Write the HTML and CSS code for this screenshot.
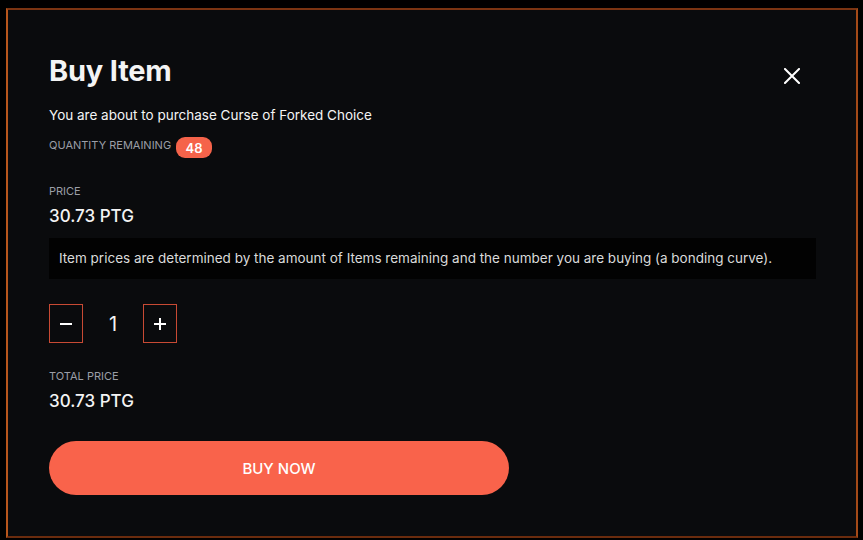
FILE: index.html
```html
<!DOCTYPE html>
<html lang="en">
<head>
<meta charset="utf-8">
<title>Buy Item</title>
<link rel="stylesheet" href="styles.css">
</head>
<body>
<div class="modal">
  <div class="header">
    <h1 class="title">Buy Item</h1>
    <button class="close" aria-label="Close">
      <svg width="16" height="16" viewBox="0 0 16 16"><path d="M1 1L15 15M15 1L1 15" stroke="#fff" stroke-width="2" stroke-linecap="square"/></svg>
    </button>
  </div>
  <p class="subtitle">You are about to purchase Curse of Forked Choice</p>
  <div class="qty-row">
    <span class="label">QUANTITY REMAINING</span>
    <span class="badge">48</span>
  </div>
  <div class="label price-label">PRICE</div>
  <div class="value">30.73 PTG</div>
  <div class="info">Item prices are determined by the amount of Items remaining and the number you are buying (a bonding curve).</div>
  <div class="stepper">
    <button class="step-btn" aria-label="Decrease">
      <svg width="14" height="14" viewBox="0 0 14 14"><path d="M1 7H13" stroke="#fff" stroke-width="2"/></svg>
    </button>
    <span class="count">1</span>
    <button class="step-btn" aria-label="Increase">
      <svg width="14" height="14" viewBox="0 0 14 14"><path d="M1 7H13M7 1V13" stroke="#fff" stroke-width="2"/></svg>
    </button>
  </div>
  <div class="label total-label">TOTAL PRICE</div>
  <div class="value">30.73 PTG</div>
  <button class="buy">BUY NOW</button>
</div>
</body>
</html>
```
FILE: styles.css
```css
html, body {
  margin: 0;
  padding: 0;
  background: #000;
}
body {
  padding: 8px 0 0 6px;
  font-family: Inter, "Liberation Sans", sans-serif;
  color: #f4f4f4;
  width: 863px;
  height: 540px;
  box-sizing: border-box;
  overflow: hidden;
}
.modal {
  box-sizing: border-box;
  width: 852px;
  height: 530px;
  background: #0a0b0d;
  border: 2px solid #7b3412;
  border-left-color: #b8561c;
  border-right-color: #a44a18;
  border-bottom-color: #6b2c0e;
  padding: 46px 40px 0 41px;
  display: flex;
  flex-direction: column;
  align-items: flex-start;
}
.header {
  display: flex;
  justify-content: space-between;
  align-items: flex-start;
  align-self: stretch;
}
.title {
  margin: 0;
  font-size: 29px;
  line-height: 29px;
  font-weight: 700;
  letter-spacing: -0.2px;
}
.close {
  background: none;
  border: 0;
  padding: 0;
  margin: 12px 16px 0 0;
  width: 16px;
  height: 16px;
  display: flex;
}
.subtitle {
  margin: 23px 0 0;
  font-size: 13.5px;
  line-height: 14px;
}
.qty-row {
  display: flex;
  align-items: flex-start;
  margin-top: 15px;
}
.label {
  font-size: 11px;
  line-height: 11px;
  color: #9b9ea6;
}
.qty-row .label {
  margin-top: 3px;
}
.badge {
  margin-left: 5px;
  width: 36px;
  height: 21px;
  border-radius: 9px;
  background: #f5634a;
  color: #fff;
  font-size: 13px;
  font-weight: 600;
  display: flex;
  align-items: center;
  justify-content: center;
}
.price-label {
  margin-top: 28px;
}
.value {
  margin-top: 11px;
  font-size: 17px;
  line-height: 17px;
  font-weight: 500;
}
.info {
  margin-top: 13px;
  align-self: stretch;
  background: #020202;
  height: 41px;
  line-height: 41px;
  font-size: 13.5px;
  color: #dadada;
  padding-left: 10px;
}
.stepper {
  margin-top: 25px;
  display: flex;
  align-items: center;
}
.step-btn {
  box-sizing: border-box;
  width: 34px;
  height: 39px;
  background: none;
  border: 1px solid #c84a34;
  padding: 0;
  display: flex;
  align-items: center;
  justify-content: center;
}
.count {
  width: 60px;
  text-align: center;
  font-size: 20px;
  font-weight: 400;
}
.total-label {
  margin-top: 28px;
}
.buy {
  margin-top: 31px;
  width: 460px;
  height: 54px;
  border: 0;
  border-radius: 27px;
  background: #f9634b;
  color: #fff;
  font-family: Inter, "Liberation Sans", sans-serif;
  font-size: 15px;
  font-weight: 500;
}
```
